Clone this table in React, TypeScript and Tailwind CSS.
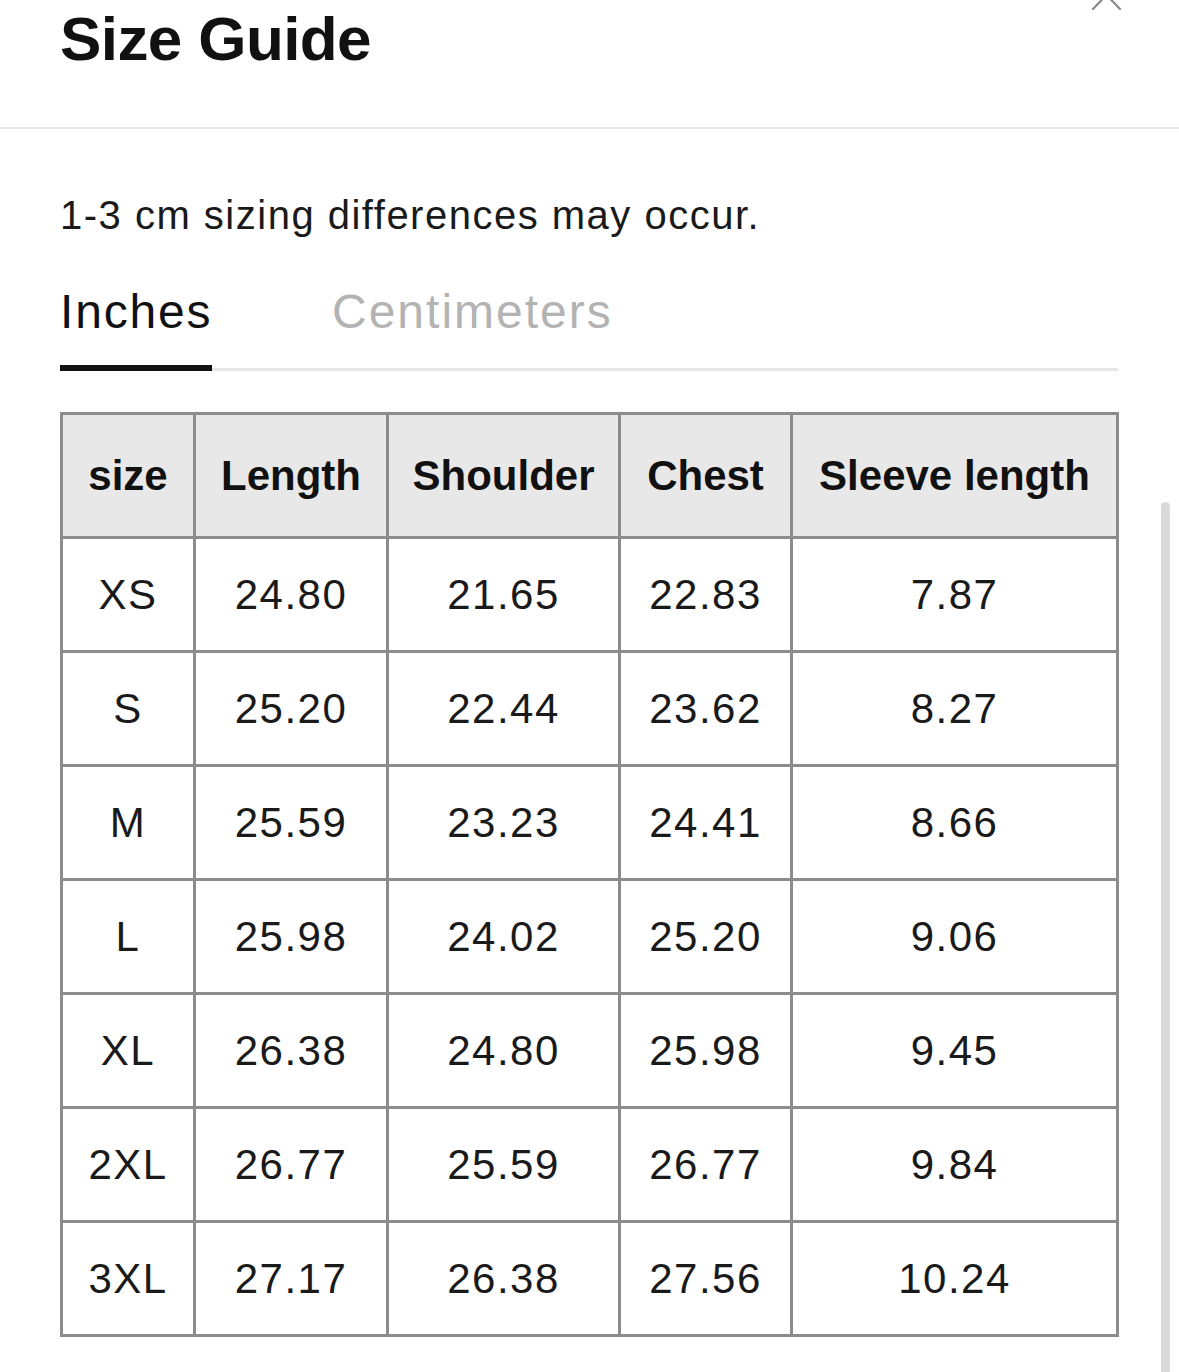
const headers = ['size', 'Length', 'Shoulder', 'Chest', 'Sleeve length'];

const rows = [
  ['XS', '24.80', '21.65', '22.83', '7.87'],
  ['S', '25.20', '22.44', '23.62', '8.27'],
  ['M', '25.59', '23.23', '24.41', '8.66'],
  ['L', '25.98', '24.02', '25.20', '9.06'],
  ['XL', '26.38', '24.80', '25.98', '9.45'],
  ['2XL', '26.77', '25.59', '26.77', '9.84'],
  ['3XL', '27.17', '26.38', '27.56', '10.24'],
];

const colWidths = ['w-[133px]', 'w-[193px]', 'w-[232px]', 'w-[172px]', 'w-[326px]'];

export default function App() {
  return (
    <div className="relative h-[1372px] overflow-hidden bg-white text-[#161616] font-['Liberation_Sans',Arial,sans-serif]">
      {/* Close button (mostly scrolled off) */}
      <svg
        className="absolute left-[1088px] top-[-22px]"
        width="36"
        height="34"
        viewBox="0 0 36 34"
        fill="none"
        stroke="#8a8a8a"
        strokeWidth="2.2"
        strokeLinecap="round"
      >
        <path d="M5 3 L32 31" />
        <path d="M32 3 L5 31" />
      </svg>

      {/* Header */}
      <div className="h-[129px] border-b-2 border-[#e6e6e6] px-[60px] pt-[8px]">
        <h1 className="text-[62px] font-bold leading-none tracking-[-0.6px] text-[#111]">Size Guide</h1>
      </div>

      <div className="px-[60px]">
        {/* Note */}
        <p className="mt-[66px] text-[40px] leading-none tracking-[1.5px] text-[#1a1a1a]">
          1-3 cm sizing differences may occur.
        </p>

        {/* Unit tabs */}
        <div className="mt-[53px] flex w-[1058px] border-b-[3px] border-[#e6e6e6]">
          <button className="-mb-[3px] w-[152px] border-b-[6px] border-[#111] pb-[29px] text-left text-[48px] leading-none tracking-[1.8px] text-[#111]">
            Inches
          </button>
          <button className="ml-[120px] pb-[32px] text-left text-[48px] leading-none tracking-[2px] text-[#b3b3b3]">
            Centimeters
          </button>
        </div>

        {/* Size table */}
        <table className="mt-[41px] w-[1059px] table-fixed border-collapse border-[3px] border-[#8c8c8c] text-center">
          <colgroup>
            {colWidths.map((w, i) => (
              <col key={i} className={w} />
            ))}
          </colgroup>
          <thead>
            <tr className="bg-[#e8e8e8]">
              {headers.map((h) => (
                <th
                  key={h}
                  className="h-[124px] border-[3px] border-[#8c8c8c] p-0 text-[42px] font-bold text-[#111]"
                >
                  {h}
                </th>
              ))}
            </tr>
          </thead>
          <tbody>
            {rows.map((r) => (
              <tr key={r[0]}>
                {r.map((v, i) => (
                  <td
                    key={i}
                    className="h-[114px] border-[3px] border-[#8c8c8c] p-0 text-[42px] tracking-[1.5px] text-[#1a1a1a]"
                  >
                    {v}
                  </td>
                ))}
              </tr>
            ))}
          </tbody>
        </table>
      </div>

      {/* Scrollbar thumb */}
      <div className="absolute left-[1161px] top-[502px] h-[900px] w-[9px] rounded-full bg-[#d9d9d9]" />
    </div>
  );
}
